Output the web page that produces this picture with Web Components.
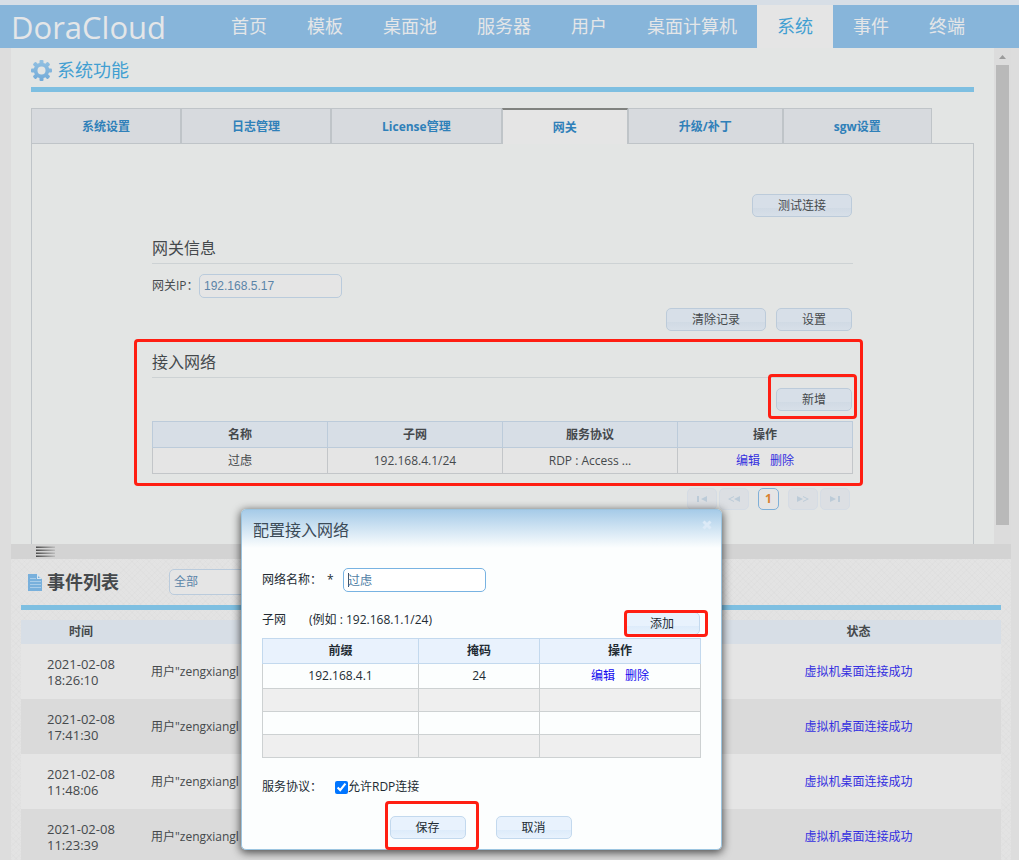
<!DOCTYPE html>
<html lang="zh-CN">
<head>
<meta charset="utf-8">
<title>DoraCloud</title>
<style>
  html, body { margin: 0; height: 100%; }
  body {
    overflow: hidden;
    background: #dddddd;
    color: #45494c;
    font: 12px/16px "Open Sans", "Noto Sans CJK SC", sans-serif;
  }
</style>
</head>
<body>
<dora-app></dora-app>
<script>
const define = (name, html, setup) => {
  const template = document.createElement('template');
  template.innerHTML = html;
  customElements.define(name, class extends HTMLElement {
    constructor() {
      super();
      this.attachShadow({ mode: 'open' }).append(template.content.cloneNode(true));
    }
    connectedCallback() {
      if (setup) setup(this, this.shadowRoot);
    }
  });
};

/* Push button */
define('ui-button', `
  <style>
    :host { display: inline-block; }
    button {
      box-sizing: border-box; display: block; width: 100%; min-width: var(--w, 76px); height: 23px;
      padding: 1px 24px 0; border: 1px solid var(--line, #bccbda); border-radius: 5px;
      background: linear-gradient(var(--top, #d7dfe8) 60%, var(--bottom, #d0dae4) 60%, var(--top, #d7dfe8));
      color: inherit; font: inherit; line-height: 20px; white-space: nowrap;
    }
  </style>
  <button type="button"><slot></slot></button>`);

/* Red annotation frame around its content */
define('call-out', `
  <style>
    :host { display: block; position: relative; }
    :host::after {
      content: ""; position: absolute; inset: var(--reach, -8px);
      border: 3px solid #ff1e12; border-radius: 4px; pointer-events: none;
    }
  </style>
  <slot></slot>`);

define('top-nav', `
  <style>
    :host { display: block; border-top: 5px solid #d7dee6; background: #87b5da; }
    header { display: flex; height: 43px; }
    .logo { width: 200px; padding-left: 11px; color: #e4e6e8; font-size: 31px; font-weight: 500; line-height: 44px; text-decoration: none; }
    nav { display: flex; }
    nav a { padding: 0 20px; color: #e4e6e8; font-size: 18px; line-height: 43px; text-decoration: none; white-space: nowrap; }
    nav a[aria-current] { background: #e5e5e5; color: #429fd2; }
  </style>
  <header>
    <a class="logo" href="#">DoraCloud</a>
    <nav>
      <a href="#">首页</a><a href="#">模板</a><a href="#">桌面池</a><a href="#">服务器</a><a href="#">用户</a><a href="#">桌面计算机</a><a href="#" aria-current="page">系统</a><a href="#">事件</a><a href="#">终端</a>
    </nav>
  </header>`);

define('gear-icon', `
  <style>:host { display: block; width: 21px; height: 21px; } svg { display: block; }</style>
  <svg width="21" height="21" viewBox="0 0 21 21" aria-hidden="true">
    <defs>
      <linearGradient id="g" gradientUnits="userSpaceOnUse" x1="0" y1="0" x2="0" y2="21"><stop stop-color="#93c1e2"/><stop offset="1" stop-color="#72aad8"/></linearGradient>
      <mask id="gear">
        <g fill="#fff">
          <circle cx="10.5" cy="10.5" r="7.8"/>
          <rect x="8.500" width="4" height="21" rx="1"/><rect y="8.500" width="21" height="4" rx="1"/>
          <g transform="rotate(45 10.5 10.5)"><rect x="8.500" width="4" height="21" rx="1"/><rect y="8.500" width="21" height="4" rx="1"/></g>
        </g>
        <circle cx="10.5" cy="10.5" r="4" fill="#000"/>
      </mask>
    </defs>
    <rect width="21" height="21" fill="url(#g)" mask="url(#gear)"/>
  </svg>`);

define('tab-bar', `
  <style>
    :host { display: block; }
    div { display: flex; }
    button {
      box-sizing: border-box; height: 36px; padding: 2px 50px 0; border: 1px solid #bfc4c8; border-radius: 0;
      background: #d7dade; color: #2f80b9; font: inherit; font-weight: bold; line-height: 32px; white-space: nowrap;
    }
    button[aria-selected=true] { border-width: 2px 1px 0; border-top-color: #80827f; background: #e5e5e5; }
  </style>
  <div role="tablist">
    <button role="tab">系统设置</button><button role="tab">日志管理</button><button role="tab">License管理</button><button role="tab" aria-selected="true">网关</button><button role="tab">升级/补丁</button><button role="tab">sgw设置</button>
  </div>`);

define('page-nav', `
  <style>
    :host { display: flex; justify-content: flex-end; gap: 2px; padding-right: 3px; }
    button { box-sizing: border-box; width: 30px; height: 22px; padding: 0; border: 1px solid #d5dce4; border-radius: 5px; background: #dcdfe3; color: #bccbd8; display: grid; place-items: center; }
    button[aria-current] { width: 21px; margin: 0 7px; border-color: #7fb0d8; background: #e5e5e5; color: #d9812f; font: bold 12px/20px "Open Sans", sans-serif; }
    svg { display: block; fill: currentColor; }
  </style>
  <button disabled aria-label="first"><svg width="10" height="6"><path d="M0 0h2v6H0zM10 0v6L4 3z"/></svg></button>
  <button disabled aria-label="previous"><svg width="12" height="6"><path d="M12 0v6L6 3zM6 0v1L2 3l4 2v1L0 3z"/></svg></button>
  <button aria-current="page">1</button>
  <button disabled aria-label="next"><svg width="12" height="6"><path d="M0 0v6l6-3zM6 0v1l4 2-4 2v1l6-3z"/></svg></button>
  <button disabled aria-label="last"><svg width="10" height="6"><path d="M8 0h2v6H8zM0 0v6l6-3z"/></svg></button>`);

define('gateway-panel', `
  <style>
    :host { display: block; padding: 50px 120px 34px; border: 1px solid #bfc4c8; border-bottom: 0; margin-top: -1px; }
    .actions { display: flex; justify-content: flex-end; gap: 10px; padding-right: 1px; margin-top: 10px; }
    .actions.first { margin-top: 0; }
    h2 { margin: 0 0 10px; padding-bottom: 3px; border-bottom: 1px solid #cdd2d4; font-size: 16px; font-weight: normal; line-height: 24px; }
    .info { margin-top: 19px; }
    .field { display: flex; align-items: center; }
    label { width: 47px; white-space: nowrap; }
    input { box-sizing: border-box; width: 143px; height: 24px; padding: 0 4px; border: 1px solid #bacbdc; border-radius: 5px; background: #e5e5e5; color: #5b84a8; font: 12px "Liberation Sans", sans-serif; }
    .networks { margin-top: 19px; --reach: -11px -10px -12px -18px; }
    .new { --reach: -14px -5px -8px -8px; }
    table { width: 100%; margin-top: 10px; border-collapse: collapse; table-layout: fixed; text-align: center; background: #e5e5e5; }
    th { height: 25px; padding: 0; border: 1px solid #bccbda; background: #d7dee6; }
    td { height: 25px; padding: 0; border: 1px solid #c3c6c9; border-top-color: #bccbda; }
    td a { margin: 0 5px; color: #342fe0; text-decoration: none; }
    page-nav { margin-top: 14px; }
  </style>
  <div class="actions first"><ui-button style="--w:100px">测试连接</ui-button></div>
  <section class="info">
    <h2>网关信息</h2>
    <div class="field"><label for="ip">网关IP：</label><input id="ip" value="192.168.5.17"></div>
    <div class="actions"><ui-button style="--w:100px">清除记录</ui-button><ui-button>设置</ui-button></div>
  </section>
  <call-out class="networks">
    <h2>接入网络</h2>
    <div class="actions"><call-out class="new"><ui-button>新增</ui-button></call-out></div>
    <table>
      <thead><tr><th>名称</th><th>子网</th><th>服务协议</th><th>操作</th></tr></thead>
      <tbody><tr><td>过虑</td><td>192.168.4.1/24</td><td>RDP : Access ...</td><td><a href="#">编辑</a><a href="#">删除</a></td></tr></tbody>
    </table>
  </call-out>
  <page-nav></page-nav>`);

define('scroll-strip', `
  <style>
    :host { display: flex; flex-direction: column; box-sizing: border-box; width: 17px; padding: 7px 2px 19px; background: #dcdcdc; }
    svg { display: block; margin: 0 auto 6px; }
    i { flex: 1; background: #b9b9b9; }
  </style>
  <svg width="7" height="4" aria-hidden="true"><path d="M0 4 3.5 0 7 4z" fill="#9b9b9b"/></svg><i></i>`);

define('system-view', `
  <style>
    :host { display: flex; background: #e3e5e4; }
    main { flex: 1; padding: 10px 20px 0; }
    h1 { display: flex; align-items: center; gap: 5px; margin: 0 0 16px; padding-bottom: 5px; border-bottom: 5px solid #7ebfe1; color: #429fd2; font-size: 18px; font-weight: normal; line-height: 24px; }
    tab-bar { position: relative; }
  </style>
  <main>
    <h1><gear-icon></gear-icon>系统功能</h1>
    <tab-bar></tab-bar>
    <gateway-panel></gateway-panel>
  </main>
  <scroll-strip></scroll-strip>`);

define('split-handle', `
  <style>
    :host { display: flex; align-items: center; height: 15px; padding-left: 25px; background: #d3d3d3; }
    svg { display: block; }
  </style>
  <svg width="19" height="11" aria-hidden="true">
    <defs><linearGradient id="f"><stop stop-color="#4c4c4c"/><stop offset="1" stop-color="#bbb"/></linearGradient></defs>
    <path fill="url(#f)" opacity=".5" d="M0 0h19v2H0zM0 3h19v2H0zM0 6h19v2H0zM0 9h19v2H0z"/>
    <path fill="url(#f)" d="M0 1h19v1H0zM0 4h19v1H0zM0 7h19v1H0zM0 10h19v1H0z"/>
  </svg>`);

define('event-list', `
  <style>
    :host {
      display: block; padding: 10px 10px 0;
      background:
        repeating-linear-gradient(45deg, #0000 0 3px, #00000003 3px 4px),
        repeating-linear-gradient(-45deg, #0000 0 3px, #00000003 3px 4px),
        #e3e3e3;
    }
    .head { display: flex; align-items: center; padding: 0 0 10px 7px; border-bottom: 5px solid #7ebfe1; margin-bottom: 10px; }
    h2 { width: 122px; margin: 0 0 0 4px; font-size: 18px; line-height: 26px; }
    select { appearance: none; box-sizing: border-box; width: 143px; height: 26px; padding: 0 4px; border: 1px solid #bacbdc; border-radius: 5px; background: #e5e5e5; color: #5b84a8; font: inherit; }
    table { width: 100%; border-collapse: collapse; table-layout: fixed; }
    .time { width: 120px; }
    .state { width: 285px; }
    th { height: 24px; padding: 0; background: #d7dee6; }
    td { height: 55px; padding: 0 10px; background: #e5e5e5; }
    tr:nth-child(even) td { background: #dadada; }
    td:first-child { padding: 0 26px; font-size: 13px; }
    td:last-child { text-align: center; }
    td a { color: #342fe0; text-decoration: none; }
  </style>
  <div class="head">
    <svg width="15" height="18" viewBox="0 0 15 18" aria-hidden="true">
      <path fill="#78b0dc" d="M1 1h8l5 5v12H0V1z"/><path fill="#d9e6f0" d="M9 0v6h5z"/><path fill="#78b0dc" d="M10 3v2h2z"/>
      <path stroke="#a9cde9" d="M2 5.500h6M2 8.500h11M2 11.500h11M2 14.500h11"/>
    </svg>
    <h2><label for="kind">事件列表</label></h2>
    <select id="kind"><option>全部</option></select>
  </div>
  <table>
    <colgroup><col class="time"><col><col class="state"></colgroup>
    <thead><tr><th>时间</th><th></th><th>状态</th></tr></thead>
    <tbody></tbody>
  </table>`, (host, root) => {
  const body = root.querySelector('tbody');
  for (const time of ['18:26:10', '17:41:30', '11:48:06', '11:23:39']) {
    const row = body.insertRow();
    row.innerHTML = `<td>2021-02-08 ${time}</td><td>用户"zengxiangl</td><td><a href="#">虚拟机桌面连接成功</a></td>`;
  }
});

define('network-dialog', `
  <style>
    :host {
      position: absolute; left: 241px; top: 509px; box-sizing: border-box; width: 481px; padding: 0 20px 10px;
      border: 1px solid #9cc5e0; border-radius: 5px; color: #222b33;
      background: linear-gradient(#a6cbe8, #fcfefe 38px); box-shadow: 0 2px 8px 1px #000000a0;
      --line: #c3d9ee; --top: #e8f2fd; --bottom: #dcebfa;
    }
    header { display: flex; justify-content: space-between; margin: 0 -14px 0 -9px; height: 58px; }
    h2 { margin: 8px 0 0; font-size: 16px; font-weight: normal; line-height: 24px; color: #3b4a57; }
    .close { display: block; width: 16px; height: 16px; margin-top: 7px; padding: 3px; border: 0; background: none; }
    .close svg { display: block; }
    .row { display: flex; align-items: center; }
    .name { height: 24px; }
    .name label { width: 65px; }
    .name span { width: 16px; }
    .name input {
      box-sizing: border-box; width: 143px; height: 24px; padding: 0 4px; border: 1px solid #78b3e2; border-radius: 5px;
      background: linear-gradient(#3f5468, #3f5468) 4px 4px / 1px 14px no-repeat #fff; color: #4f7ea5; font: inherit; outline: 0;
    }
    .subnet { justify-content: space-between; align-items: flex-start; margin: 20px 0 3px; padding-right: 1px; }
    .subnet span { margin-left: 23px; }
    .add { --reach: -2px -8px -2px 0; }
    table { width: 439px; border-collapse: collapse; table-layout: fixed; text-align: center; }
    .prefix { width: 156px; } .mask { width: 121px; }
    th { height: 24px; padding: 0; border: 1px solid #c3d9ee; background: #e9f2fd; }
    td { height: 22px; padding: 0; border: 1px solid #cdd1d2; }
    tr:first-child td { height: 24px; }
    tr:nth-child(even) td { background: #efefef; }
    td a { margin: 0 5px; color: #1208ef; text-decoration: none; }
    .proto { margin-top: 20px; height: 18px; }
    .proto > span { width: 73px; }
    .proto input { width: 13px; height: 13px; margin: 0; }
    .foot { justify-content: center; gap: 30px; margin-top: 20px; padding-right: 2px; }
    .save { --reach: -15px -13px -11px -5px; }
  </style>
  <header>
    <h2>配置接入网络</h2>
    <button class="close" aria-label="close"><svg width="10" height="10"><path d="M1.500 1.500l7 7M8.500 1.500l-7 7" stroke="#dceaf7" stroke-width="3"/></svg></button>
  </header>
  <div class="row name"><label for="name">网络名称：</label><span>*</span><input id="name" value="过虑"></div>
  <div class="row subnet"><div>子网<span>(例如 : 192.168.1.1/24)</span></div><call-out class="add"><ui-button>添加</ui-button></call-out></div>
  <table>
    <colgroup><col class="prefix"><col class="mask"><col></colgroup>
    <thead><tr><th>前缀</th><th>掩码</th><th>操作</th></tr></thead>
    <tbody>
      <tr><td>192.168.4.1</td><td>24</td><td><a href="#">编辑</a><a href="#">删除</a></td></tr>
      <tr><td></td><td></td><td></td></tr>
      <tr><td></td><td></td><td></td></tr>
      <tr><td></td><td></td><td></td></tr>
    </tbody>
  </table>
  <div class="row proto"><span>服务协议：</span><input id="rdp" type="checkbox" checked><label for="rdp">允许RDP连接</label></div>
  <div class="row foot"><call-out class="save"><ui-button>保存</ui-button></call-out><ui-button>取消</ui-button></div>`);

define('dora-app', `
  <style>
    :host { display: flex; flex-direction: column; position: relative; height: 100%; overflow: hidden; }
    .page { flex: 1; margin: 0 8px 0 11px; display: flex; flex-direction: column; }
    event-list { flex: 1; }
  </style>
  <top-nav></top-nav>
  <div class="page">
    <system-view></system-view>
    <split-handle></split-handle>
    <event-list></event-list>
  </div>
  <network-dialog></network-dialog>`);
</script>
</body>
</html>
